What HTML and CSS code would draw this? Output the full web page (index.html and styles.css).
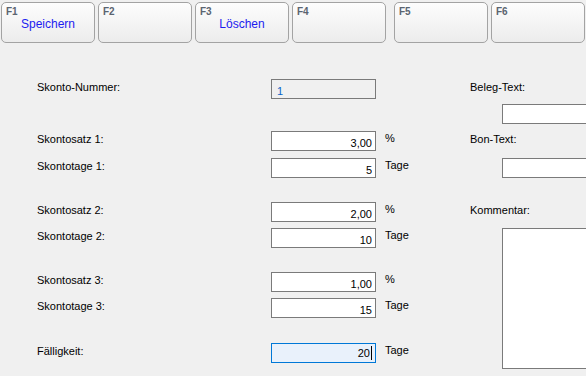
FILE: index.html
```html
<!DOCTYPE html>
<html lang="de">
<head>
  <meta charset="UTF-8">
  <title>Skonto</title>
  <link rel="stylesheet" href="styles.css">
</head>
<body>
  <div class="toolbar">
    <button class="fkey"><span class="key">F1</span><span class="caption">Speichern</span></button>
    <button class="fkey"><span class="key">F2</span><span class="caption"></span></button>
    <button class="fkey"><span class="key">F3</span><span class="caption">Löschen</span></button>
    <button class="fkey"><span class="key">F4</span><span class="caption"></span></button>
    <button class="fkey sep"><span class="key">F5</span><span class="caption"></span></button>
    <button class="fkey"><span class="key">F6</span><span class="caption"></span></button>
  </div>

  <div class="form">
    <div class="col-left">
      <div class="row">
        <label>Skonto-Nummer:</label>
        <input type="text" class="field readonly" value="1" readonly>
      </div>

      <div class="row group">
        <label>Skontosatz 1:</label>
        <input type="text" class="field num" value="3,00">
        <span class="unit">%</span>
      </div>
      <div class="row next">
        <label>Skontotage 1:</label>
        <input type="text" class="field num" value="5">
        <span class="unit">Tage</span>
      </div>

      <div class="row group2">
        <label>Skontosatz 2:</label>
        <input type="text" class="field num" value="2,00">
        <span class="unit">%</span>
      </div>
      <div class="row next2">
        <label>Skontotage 2:</label>
        <input type="text" class="field num" value="10">
        <span class="unit">Tage</span>
      </div>

      <div class="row group2">
        <label>Skontosatz 3:</label>
        <input type="text" class="field num" value="1,00">
        <span class="unit">%</span>
      </div>
      <div class="row next2">
        <label>Skontotage 3:</label>
        <input type="text" class="field num" value="15">
        <span class="unit">Tage</span>
      </div>

      <div class="row group3">
        <label>Fälligkeit:</label>
        <div class="field num focused"><span class="value">20</span><span class="caret"></span></div>
        <span class="unit">Tage</span>
      </div>
    </div>

    <div class="col-right">
      <label class="rlabel">Beleg-Text:</label>
      <input type="text" class="field wide beleg">
      <label class="rlabel bon">Bon-Text:</label>
      <input type="text" class="field wide bon-in">
      <label class="rlabel komm">Kommentar:</label>
      <textarea class="field memo"></textarea>
    </div>
  </div>
</body>
</html>
```

FILE: styles.css
```css
* {
  box-sizing: border-box;
  font-family: 'Liberation Sans', Arial, sans-serif;
}

body {
  margin: 0;
  padding: 0;
  background: #f0f0f0;
  color: #000;
  font-size: 11px;
  width: 586px;
  height: 376px;
  overflow: hidden;
}

/* function key bar */
.toolbar {
  display: flex;
  padding: 2px 0 0 1px;
  gap: 3px;
}

.fkey {
  width: 94px;
  height: 41px;
  padding: 0;
  border: 1px solid #a3a3a3;
  border-radius: 5px;
  background: linear-gradient(#fdfdfd, #ececec);
  display: flex;
  flex-direction: column;
  align-items: stretch;
  text-align: left;
  flex-shrink: 0;
}

.fkey.sep {
  margin-left: 5px;
}

.fkey .key {
  font-size: 10px;
  font-weight: bold;
  color: #5b6470;
  padding: 4px 0 0 4px;
  line-height: 10px;
}

.fkey .caption {
  font-size: 12px;
  color: #1c1cf0;
  text-align: center;
  line-height: 13px;
  margin-top: 1px;
}

/* form */
.form {
  display: flex;
  margin-top: 36px;
}

.col-left {
  width: 470px;
  flex-shrink: 0;
  padding-left: 37px;
  display: flex;
  flex-direction: column;
}

.row {
  display: flex;
  align-items: flex-start;
  height: 20px;
}

.row.group { margin-top: 32px; }
.row.next { margin-top: 7px; }
.row.group2 { margin-top: 24px; }
.row.next2 { margin-top: 6px; }
.row.group3 { margin-top: 25px; }

.row label,
.rlabel {
  line-height: 16px;
  font-size: 11px;
}

.row label {
  width: 234px;
}

.field {
  height: 20px;
  border: 1px solid #7a7a7a;
  background: #fff;
  font-size: 11px;
  padding: 0 3px;
  margin: 0;
  outline: none;
  color: #000;
}

.row .field {
  width: 105px;
}

.field.num {
  text-align: right;
  padding-top: 3px;
}

.field.readonly {
  background: #f0f0f0;
  color: #0a64c8;
  padding-left: 5px;
  padding-top: 3px;
}

.field.focused {
  border-color: #0078d7;
  background: #e9f1fb;
  display: flex;
  justify-content: flex-end;
  align-items: flex-start;
  padding-top: 2px;
  line-height: 15px;
}

.caret {
  width: 1px;
  height: 14px;
  background: #000;
  margin-left: 1px;
}

.unit {
  margin-left: 9px;
  line-height: 14px;
}

/* right column is cut off by the window edge */
.col-right {
  flex: 1;
  min-width: 0;
  overflow: hidden;
  display: flex;
  flex-direction: column;
  align-items: flex-start;
}

.field.wide {
  width: 120px;
  margin-left: 32px;
  flex-shrink: 0;
}

.beleg { margin-top: 9px; }
.rlabel.bon { margin-top: 7px; }
.bon-in { margin-top: 11px; }
.rlabel.komm { margin-top: 24px; }

.memo {
  width: 120px;
  height: 141px;
  margin-left: 32px;
  margin-top: 10px;
  resize: none;
  flex-shrink: 0;
}
```
